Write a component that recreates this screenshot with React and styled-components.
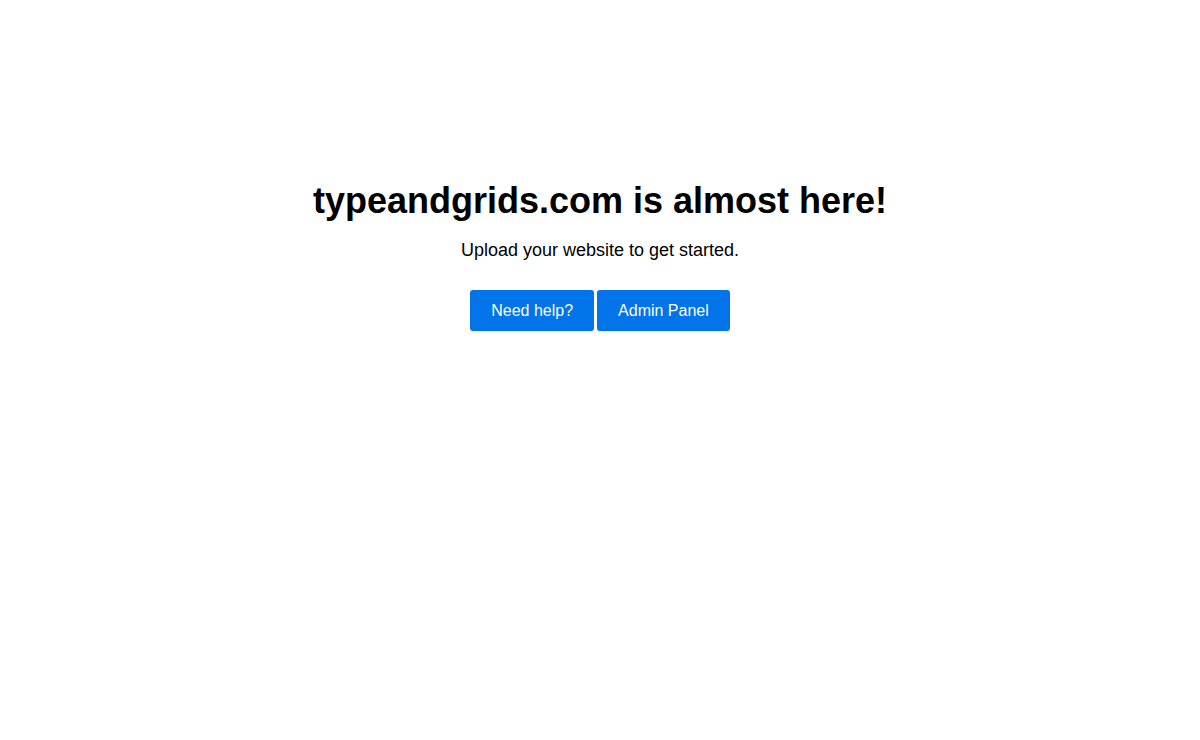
import React from 'react';
import styled, { createGlobalStyle } from 'styled-components';

const GlobalStyle = createGlobalStyle`
    body {
        margin : 0;
        background : #fff;
        font-family : "Liberation Sans", Arial, sans-serif;
        color : #000;
    }
`

const Page = styled.main`
    display : flex;
    flex-direction : column;
    align-items : center;
    padding-top : 179px;
    text-align : center;
`

const Title = styled.h1`
    font-size : 36px;
    font-weight : 700;
    margin : 0;
    line-height : 44px;
`

const Subtitle = styled.p`
    font-size : 18px;
    margin : 16px 0 0;
    line-height : 22px;
`

const Actions = styled.div`
    display : flex;
    gap : 3px;
    margin-top : 29px;
`

const Button = styled.a`
    display : inline-block;
    background : #0074e8;
    color : #fff;
    font-size : 16px;
    line-height : 19px;
    padding : 11px 21px;
    border-radius : 3px;
    text-decoration : none;
    cursor : pointer;
`

const App = () => {
    return (
        <>
            <GlobalStyle />
            <Page>
                <Title>typeandgrids.com is almost here!</Title>
                <Subtitle>Upload your website to get started.</Subtitle>
                <Actions>
                    <Button>Need help?</Button>
                    <Button>Admin Panel</Button>
                </Actions>
            </Page>
        </>
    )
}

export default App
